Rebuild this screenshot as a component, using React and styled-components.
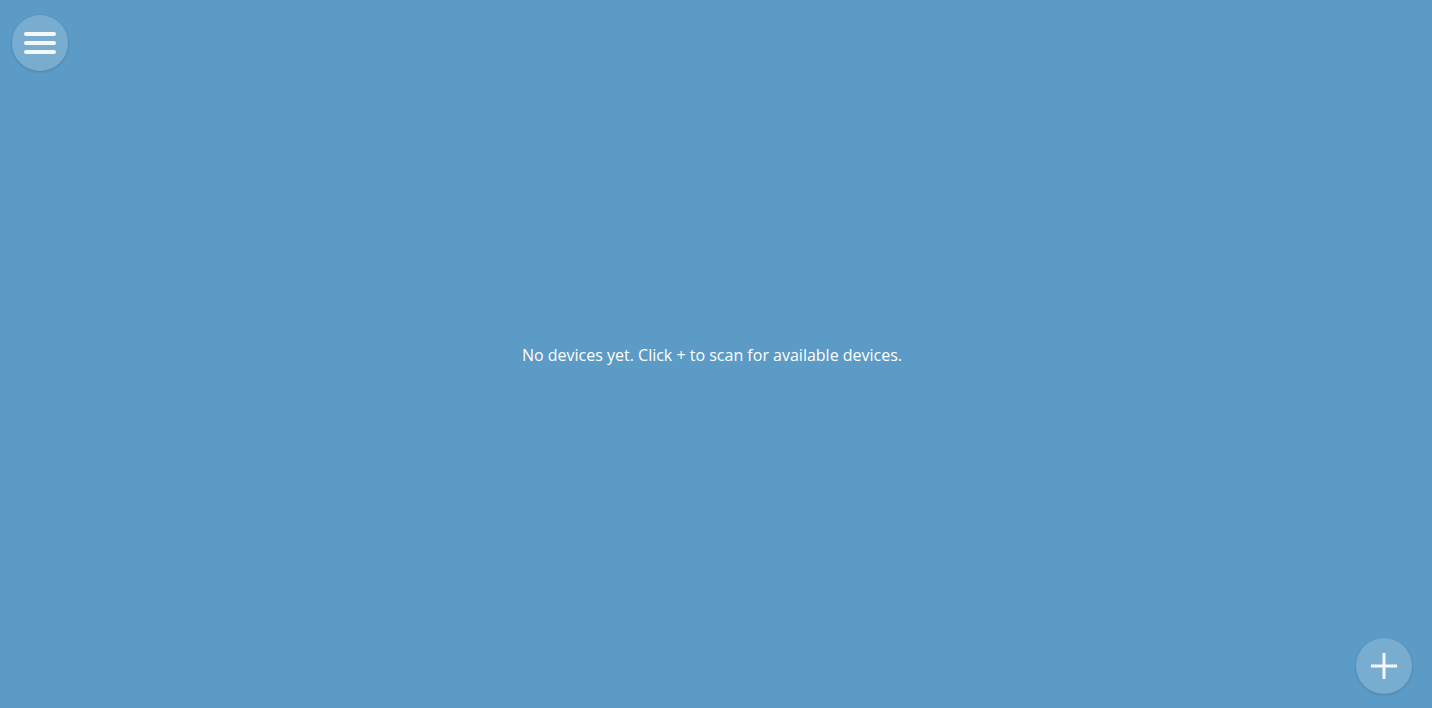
import React from "react";
import styled, { createGlobalStyle } from "styled-components";

const GlobalStyle = createGlobalStyle`
  html, body {
    margin: 0;
    padding: 0;
    height: 100%;
    background: #5b9bc6;
  }
  #root {
    height: 100%;
  }
`;

const Screen = styled.div`
  height: 100vh;
  display: flex;
  flex-direction: column;
  font-family: "Open Sans", "Noto Sans", sans-serif;
  color: #fff;
  background: #5b9bc6;
  box-sizing: border-box;
  padding: 15px 20px 14px 12px;
`;

const TopBar = styled.div`
  display: flex;
`;

const BottomBar = styled.div`
  display: flex;
  justify-content: flex-end;
`;

const RoundButton = styled.button`
  width: 56px;
  height: 56px;
  border-radius: 50%;
  border: none;
  padding: 0;
  background: rgba(255, 255, 255, 0.18);
  box-shadow: 0 1px 3px rgba(0, 0, 0, 0.15);
  display: flex;
  align-items: center;
  justify-content: center;
  cursor: pointer;
`;

const Empty = styled.div`
  flex: 1;
  display: flex;
  align-items: center;
  justify-content: center;
  font-size: 16px;
`;

const MenuIcon = () => (
  <svg width="32" height="26" viewBox="0 0 32 26">
    <g stroke="#f4f8fb" strokeWidth="4" strokeLinecap="round">
      <line x1="2" y1="4" x2="30" y2="4" />
      <line x1="2" y1="13" x2="30" y2="13" />
      <line x1="2" y1="22" x2="30" y2="22" />
    </g>
  </svg>
);

const PlusIcon = () => (
  <svg width="28" height="28" viewBox="0 0 28 28">
    <g stroke="#f4f8fb" strokeWidth="3">
      <line x1="1" y1="14" x2="27" y2="14" />
      <line x1="14" y1="1" x2="14" y2="27" />
    </g>
  </svg>
);

export default function App() {
  return (
    <>
      <GlobalStyle />
      <Screen>
        <TopBar>
          <RoundButton aria-label="Menu">
            <MenuIcon />
          </RoundButton>
        </TopBar>
        <Empty>No devices yet. Click + to scan for available devices.</Empty>
        <BottomBar>
          <RoundButton aria-label="Scan">
            <PlusIcon />
          </RoundButton>
        </BottomBar>
      </Screen>
    </>
  );
}
